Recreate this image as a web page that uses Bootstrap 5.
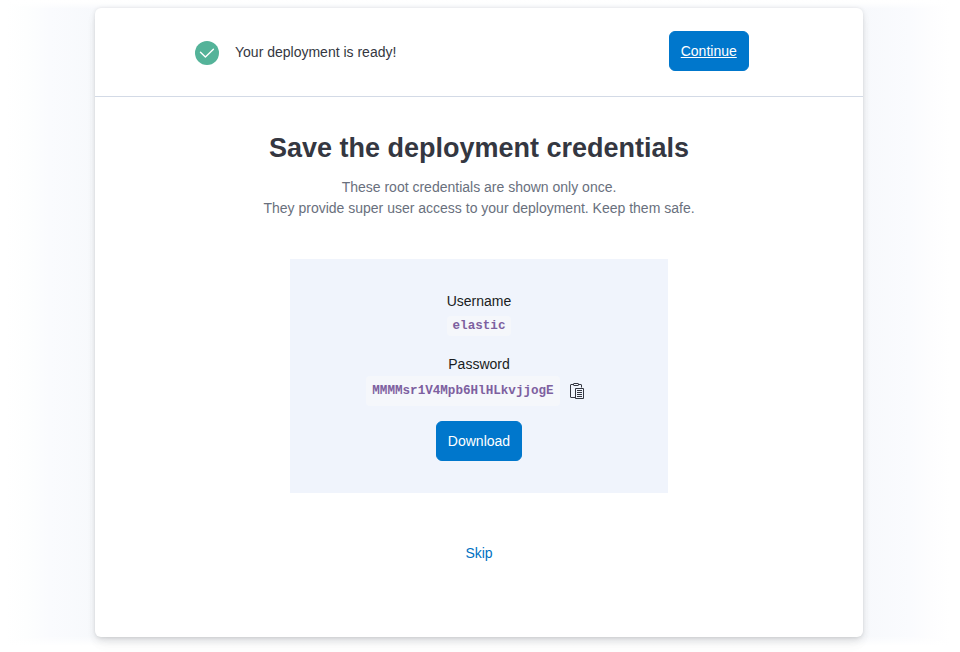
<!DOCTYPE html>
<html lang="en">
<head>
<meta charset="utf-8">
<meta name="viewport" content="width=device-width, initial-scale=1">
<title>Save the deployment credentials</title>
<link href="https://cdn.jsdelivr.net/npm/bootstrap@5.3.0/dist/css/bootstrap.min.css" rel="stylesheet">
<style>
body {
  font-family: "Liberation Sans", Arial, sans-serif;
  font-size: 14px;
  line-height: 21px;
  color: #343741;
  height: 652px;
  overflow: hidden;
  padding: 8px 97px 0 95px;
  background:
    linear-gradient(to bottom, #fff 0, rgba(255,255,255,.9) 3px, rgba(255,255,255,0) 9px, rgba(255,255,255,0) 636px, #fff 646px),
    linear-gradient(to right, #fff 5px, #fdfefe 27px, #fafbfe 50px, #f7f9fc 95px, #f7f9fc 863px, #fafbfe 910px, #fdfdfe 930px, #fff 950px);
}
.panel {
  height: 629px;
  border: 0;
  border-radius: 6px;
  box-shadow: 0 .9px 4px -1px rgba(0,0,0,.12), 0 2.6px 8px -1px rgba(0,0,0,.08), 0 5.7px 12px -1px rgba(0,0,0,.05), 0 10px 15px -1px rgba(0,0,0,.02);
}
.panel-top { height: 89px; padding: 0 114px 0 100px; border-bottom: 1px solid #d3dae6; }
.action {
  --bs-btn-bg: #0077cc;
  --bs-btn-border-color: #0077cc;
  --bs-btn-color: #fff;
  --bs-btn-hover-bg: #006bb8;
  --bs-btn-hover-color: #fff;
  --bs-btn-font-size: 14px;
  --bs-btn-padding-x: 11px;
  --bs-btn-padding-y: 0;
  --bs-btn-border-radius: 6px;
  height: 40px;
  line-height: 38px;
}
.ready { margin-top: 2px; }
.ready-text { line-height: 20px; margin-bottom: 2px; }
.continue { width: 80px; margin-bottom: 2px; padding: 0 11px 0 10.5px; }
.headline { font-size: 27px; line-height: 32px; font-weight: 700; margin: 35px 0 13px; }
.note { color: #69707d; }
.creds { width: 378px; height: 234px; background: #f0f4fc; margin-top: 40px; padding-top: 32px; color: #1a1c21; }
.secret {
  font-family: "Liberation Mono", monospace;
  font-size: 12.6px;
  font-weight: 700;
  color: #7d60a0;
  background: #f5f7fb;
  border-radius: 4px;
  padding: 0 6px;
}
.user { height: 20px; line-height: 20px; margin-top: 4px; }
.pass-label { margin-top: 18px; }
.pass-row { gap: 9px; margin: 1px 7px 0 0; }
.pass { height: 30px; line-height: 30px; }
.download { margin-top: 15px; }
.skip { color: #0071c2; margin-top: 50px; }
</style>
<script src="https://cdn.jsdelivr.net/npm/bootstrap@5.3.0/dist/js/bootstrap.bundle.min.js"></script>
</head>
<body>
<main class="card panel">
  <header class="panel-top d-flex align-items-center justify-content-between flex-shrink-0">
    <div class="ready d-flex align-items-center gap-3">
      <svg width="24" height="24" viewBox="0 0 24 24" aria-hidden="true"><circle cx="12" cy="12" r="12" fill="#54b399"/><path d="M5.5 11.3l4.9 4.7 8-7.8" fill="none" stroke="#fff" stroke-width="1.4" stroke-linecap="round" stroke-linejoin="round"/></svg>
      <span class="ready-text">Your deployment is ready!</span>
    </div>
    <a href="#" class="btn action continue text-nowrap text-decoration-underline">Continue</a>
  </header>
  <section class="d-flex flex-column align-items-center text-center">
    <h1 class="headline">Save the deployment credentials</h1>
    <p class="note mb-0">These root credentials are shown only once.<br>They provide super user access to your deployment. Keep them safe.</p>
    <div class="creds d-flex flex-column align-items-center">
      <div>Username</div>
      <div class="secret user">elastic</div>
      <div class="pass-label">Password</div>
      <div class="pass-row d-flex align-items-center">
        <div class="secret pass">MMMMsr1V4Mpb6HlHLkvjjogE</div>
        <button type="button" class="btn p-0 border-0 d-flex" aria-label="Copy password">
          <svg width="16" height="16" viewBox="0 0 16 16" fill="none" stroke="#343741"><path d="M6 14.5H2a.5.5 0 0 1-.5-.5V2a.5.5 0 0 1 .5-.5h2.5m5 0H12a.5.5 0 0 1 .5.5v2.5"/><rect x="4.5" y=".5" width="5" height="2" rx=".5"/><path d="M6.5 5.5h8v10h-8zM8 7.5h5M8 9.5h5M8 11.5h5M8 13.5h5"/></svg>
        </button>
      </div>
      <button type="button" class="btn action download">Download</button>
    </div>
    <a href="#" class="skip text-decoration-none">Skip</a>
  </section>
</main>
</body>
</html>
